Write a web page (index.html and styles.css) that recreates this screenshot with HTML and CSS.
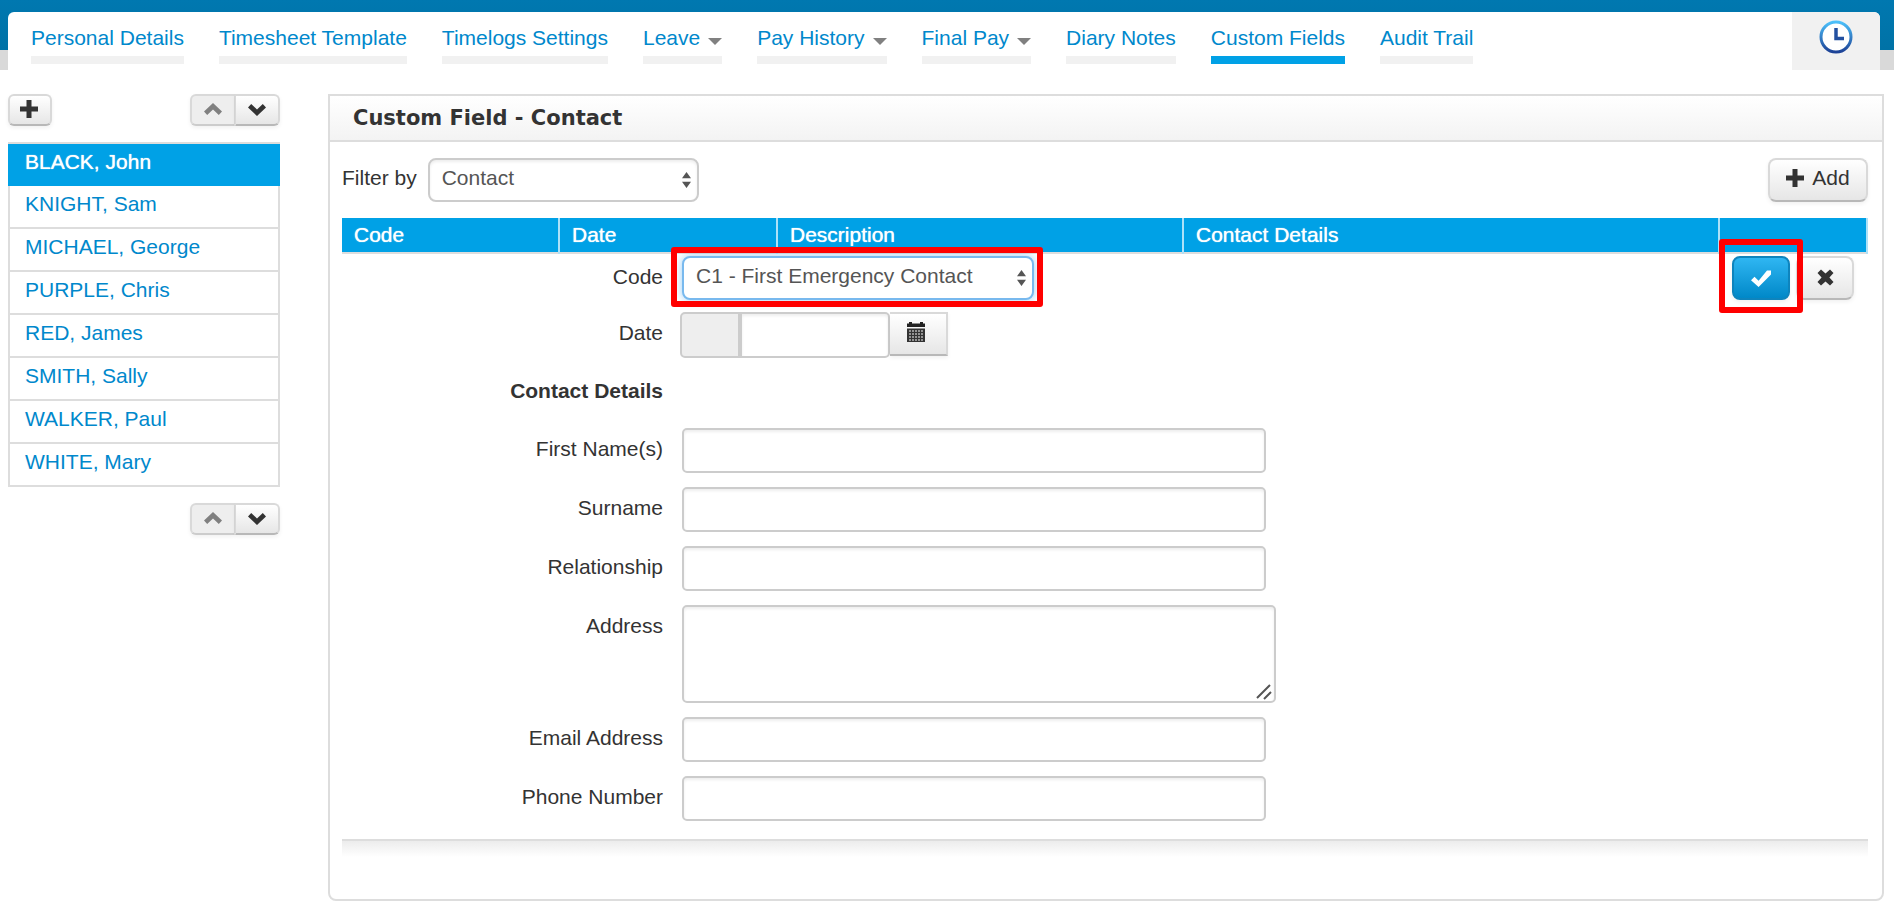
FILE: index.html
```html
<!DOCTYPE html>
<html lang="en">
<head>
<meta charset="utf-8">
<title>Custom Field - Contact</title>
<link rel="stylesheet" href="styles.css">
</head>
<body>
<svg class="defs" aria-hidden="true">
  <symbol id="plus" viewBox="0 0 18 18"><path d="M6.5 0h5v6.500h6.500v5h-6.500v6.500h-5v-6.500h-6.500v-5h6.500z"/></symbol>
  <symbol id="chevron" viewBox="0 0 18 13"><path d="M3.200 1 9 6.400 14.800 1 18 4.600 9 13 0 4.600z"/></symbol>
  <symbol id="check" viewBox="0 0 20 17"><path d="M3.500 6.800 7.600 10.800 16 0.500H20V4.500L7.600 17 0 10.200z"/></symbol>
  <symbol id="cross" viewBox="0 0 17 17"><path d="M4 .5 8.500 4.600 13 .5 16.500 4 12.400 8.500 16.500 13 13 16.500 8.500 12.400 4 16.500 .5 13 4.600 8.500 .5 4z"/></symbol>
</svg>

<header class="top">
  <div class="tabs">
    <nav class="tab-list" aria-label="Employee sections">
      <a class="tab" href="#personal">Personal Details</a>
      <a class="tab" href="#timesheet">Timesheet Template</a>
      <a class="tab" href="#timelogs">Timelogs Settings</a>
      <a class="tab drop" href="#leave">Leave</a>
      <a class="tab drop" href="#history">Pay History</a>
      <a class="tab drop" href="#final">Final Pay</a>
      <a class="tab" href="#diary">Diary Notes</a>
      <a class="tab active" href="#custom" aria-current="page">Custom Fields</a>
      <a class="tab" href="#audit">Audit Trail</a>
    </nav>
    <button class="clock" type="button" aria-label="Time">
      <svg width="34" height="34" viewBox="0 0 34 34">
        <defs><linearGradient id="ring" x1="0" y1="0" x2="0" y2="1"><stop offset="0" stop-color="#4cc0fa"/><stop offset="1" stop-color="#1d4296"/></linearGradient></defs>
        <circle cx="17" cy="17" r="15" fill="#fff" stroke="url(#ring)" stroke-width="3"/>
        <path d="M17 8v10.500h8" fill="none" stroke="#2350a0" stroke-width="3.500"/>
      </svg>
    </button>
  </div>
</header>

<div class="page">
  <aside class="side">
    <div class="side-bar">
      <button class="btn small" type="button" aria-label="Add employee"><svg class="i18"><use href="#plus"/></svg></button>
      <div class="pair">
        <button class="btn small" type="button" aria-label="Previous" disabled><svg class="chev up"><use href="#chevron"/></svg></button>
        <button class="btn small" type="button" aria-label="Next"><svg class="chev"><use href="#chevron"/></svg></button>
      </div>
    </div>
    <ul class="people">
      <li class="current"><a href="#black">BLACK, John</a></li>
      <li><a href="#knight">KNIGHT, Sam</a></li>
      <li><a href="#michael">MICHAEL, George</a></li>
      <li><a href="#purple">PURPLE, Chris</a></li>
      <li><a href="#red">RED, James</a></li>
      <li><a href="#smith">SMITH, Sally</a></li>
      <li><a href="#walker">WALKER, Paul</a></li>
      <li><a href="#white">WHITE, Mary</a></li>
    </ul>
    <div class="side-bar end">
      <div class="pair">
        <button class="btn small" type="button" aria-label="Previous" disabled><svg class="chev up"><use href="#chevron"/></svg></button>
        <button class="btn small" type="button" aria-label="Next"><svg class="chev"><use href="#chevron"/></svg></button>
      </div>
    </div>
  </aside>

  <main class="panel">
    <h1 class="title">Custom Field - Contact</h1>
    <div class="body">
      <div class="filter">
        <label for="filter">Filter by</label>
        <span class="pick filter-pick">
          <select id="filter"><option>Contact</option></select>
          <svg class="arrows" viewBox="0 0 10 18"><path d="M5 0 10 7H0zM0 11h10L5 18z"/></svg>
        </span>
        <button class="btn add" type="button"><svg class="i18"><use href="#plus"/></svg>Add</button>
      </div>

      <table class="grid">
        <colgroup><col class="c-code"><col class="c-date"><col class="c-desc"><col class="c-details"><col class="c-act"></colgroup>
        <thead>
          <tr><th>Code</th><th>Date</th><th>Description</th><th>Contact Details</th><th aria-label="Actions"></th></tr>
        </thead>
        <tbody>
          <tr>
            <td colspan="4">
              <div class="form">
                <label for="code">Code</label>
                <span class="pick code-pick marked">
                  <select id="code"><option>C1 - First Emergency Contact</option></select>
                  <svg class="arrows" viewBox="0 0 10 18"><path d="M5 0 10 7H0zM0 11h10L5 18z"/></svg>
                </span>
                <label for="date">Date</label>
                <div class="date">
                  <span class="prefix"></span>
                  <input id="date" type="text">
                  <button class="btn cal" type="button" aria-label="Open calendar">
                    <svg width="18" height="20" viewBox="0 0 18 20"><path d="M0 1.500h18V5H0zM2 0h3v3H2zM13 0h3v3h-3z" fill="#222"/><path d="M0 6.500h18V20H0z" fill="#333"/><path d="M2 9h14M2 12h14M2 15h14M2 18h14" stroke="#b4b4b4" stroke-width="1.500" stroke-dasharray="2 1"/></svg>
                  </button>
                </div>
                <h2 class="group">Contact Details</h2>
                <label for="first">First Name(s)</label><input id="first" type="text">
                <label for="surname">Surname</label><input id="surname" type="text">
                <label for="relation">Relationship</label><input id="relation" type="text">
                <label for="address">Address</label>
                <span class="area"><textarea id="address"></textarea>
                  <svg class="grip" viewBox="0 0 16 16"><path d="M1 14 14 1M8 15l7-7" /></svg></span>
                <label for="email">Email Address</label><input id="email" type="email">
                <label for="phone">Phone Number</label><input id="phone" type="tel">
              </div>
            </td>
            <td>
              <div class="actions">
                <span class="marked"><button class="btn save" type="button" aria-label="Save"><svg class="tick"><use href="#check"/></svg></button></span>
                <button class="btn cancel" type="button" aria-label="Cancel"><svg class="x"><use href="#cross"/></svg></button>
              </div>
            </td>
          </tr>
        </tbody>
      </table>
      <div class="foot"></div>
    </div>
  </main>
</div>
</body>
</html>
```
FILE: styles.css
```css
* { box-sizing: border-box; }

body {
  margin: 0;
  background: #fff;
  color: #333;
  font: 21px/24px "Liberation Sans", Arial, sans-serif;
}

a { color: #0088cc; text-decoration: none; }
button, input, select, textarea { font: inherit; color: #555; margin: 0; }
button { cursor: pointer; }
svg { display: block; }
.defs { position: absolute; width: 0; height: 0; }

/* Header */
.top {
  padding: 12px 14px 0 8px;
  background: linear-gradient(#0078b0 0, #0072a6 50px, #d9d9d9 50px);
}
.tabs {
  display: flex;
  justify-content: space-between;
  height: 58px;
  background: #fff;
  border-radius: 6px 6px 0 0;
  overflow: hidden;
}
.tab-list { display: flex; gap: 35px; padding: 14px 0 0 23px; }
.tab { height: 38px; border-bottom: 8px solid #f1f1f1; white-space: nowrap; }
.tab.active { border-color: #00a1e6; }
.drop::after {
  content: "";
  display: inline-block;
  margin-left: 8px;
  border: 7px solid transparent;
  border-top-color: #808080;
  border-bottom: 0;
}
.clock {
  display: flex;
  justify-content: center;
  width: 88px;
  padding: 8px 0 0;
  border: 0;
  background: #f1f1f1;
}

/* Layout */
.page {
  display: grid;
  grid-template-columns: 272px minmax(0, 1fr);
  gap: 48px;
  align-items: start;
  padding: 24px 10px 10px 8px;
}

/* Buttons */
.btn {
  display: flex;
  align-items: center;
  justify-content: center;
  padding: 0;
  border: 2px solid #d9d9d9;
  border-bottom-color: #b8b8b8;
  border-radius: 8px;
  background: linear-gradient(#fff, #e6e6e6);
  box-shadow: 0 2px 4px rgba(0, 0, 0, .06);
  color: #333;
  fill: #333;
}
.btn:disabled { background: #eee; border-bottom-color: #ccc; fill: #808080; }
.small { width: 44px; height: 32px; border-radius: 6px; padding: 0 2px 2px 0; }
.i18 { width: 18px; height: 18px; }
.chev { width: 18px; height: 13px; }
.up { transform: rotate(180deg); }
.pair { display: flex; }
.pair .btn { width: 45px; padding-right: 0; }
.pair .btn:first-child { border-radius: 6px 0 0 6px; border-right-width: 1px; }
.pair .btn:last-child { border-radius: 0 6px 6px 0; border-left-width: 1px; }

/* Sidebar */
.side-bar { display: flex; justify-content: space-between; }
.side-bar.end { justify-content: flex-end; }
.people {
  margin: 16px 0;
  padding: 0;
  list-style: none;
  border-top: 2px solid #ddd;
}
.people li {
  padding: 6px 15px 11px;
  border: solid #ddd;
  border-width: 0 2px 2px;
}
.people .current {
  padding-bottom: 12px;
  border-width: 0 2px;
  border-color: #00a1e6;
  background: #00a1e6;
}
.people .current a { color: #fff; text-shadow: 0 0 1px #fff; }

/* Panel */
.panel { border: 2px solid #ddd; border-radius: 0 0 8px 8px; }
.title {
  margin: 0;
  padding: 9px 23px;
  border-bottom: 2px solid #ddd;
  background: linear-gradient(#fff, #f3f3f3);
  font: bold 21px/26px "DejaVu Sans", Verdana, sans-serif;
}
.body { padding: 16px 14px 42px 12px; }
.filter { display: flex; align-items: flex-start; gap: 11px; margin-bottom: 16px; }
.filter label { line-height: 40px; }

/* Fields */
.pick { display: block; position: relative; height: 44px; }
.filter-pick { width: 271px; }
.code-pick { width: 352px; }
.pick select, input, textarea {
  display: block;
  border: 2px solid #ccc;
  border-radius: 5px;
  background: #fff;
  box-shadow: inset 0 2px 3px rgba(0, 0, 0, .07);
}
.pick select {
  width: 100%;
  height: 44px;
  padding: 0 12px 4px;
  border-radius: 8px;
  appearance: none;
}
.arrows {
  position: absolute;
  right: 8px;
  top: 13px;
  width: 9px;
  height: 18px;
  fill: #555;
  pointer-events: none;
}
.code-pick select { border-color: #78b9ee; box-shadow: 0 0 8px rgba(82, 168, 236, .6); }
.add { width: 100px; height: 44px; gap: 8px; margin-left: auto; padding-bottom: 4px; }

/* Highlight frame around a control */
.marked { position: relative; }
.marked::after {
  content: "";
  position: absolute;
  inset: -9px -9px -7px -11px;
  border: 6px solid #f00;
  border-radius: 3px;
  pointer-events: none;
}

/* Table */
.grid { width: 100%; table-layout: fixed; border-collapse: separate; border-spacing: 0; }
.c-code, .c-date { width: 218px; }
.c-desc { width: 406px; }
.c-act { width: 148px; }
.grid th {
  height: 36px;
  padding: 0 12px 2px;
  border: solid #ade1f8;
  border-width: 0 2px 0 0;
  background: #00a1e6;
  box-shadow: inset 0 -2px #ddd;
  color: #fff;
  font-weight: normal;
  text-align: left;
  text-shadow: 0 0 1px #fff;
}
.grid td { padding: 2px 0 18px; vertical-align: top; }

.form {
  display: grid;
  grid-template-columns: 321px minmax(0, 584px);
  column-gap: 19px;
}
.form label, .group { line-height: 42px; text-align: right; }
.form > input, .date, .area, .form > .pick { margin-bottom: 14px; }
.form > input { width: 100%; height: 45px; }
.form > .pick, .date { margin-bottom: 12px; }
.form > input:last-child { margin-bottom: 0; }
.group { grid-column: 1; margin: 0 0 14px; padding-bottom: 2px; font-size: 21px; }
.group + label { grid-column: 1; }

.date { display: flex; margin-left: -2px; }
.prefix {
  width: 60px;
  height: 46px;
  border: 2px solid #ccc;
  border-radius: 5px 0 0 5px;
  background: #eee;
}
.date input { width: 150px; height: 46px; border-radius: 0 5px 5px 0; }
.cal { width: 58px; height: 44px; border-left: 0; border-radius: 0; padding: 0 4px 4px 0; }

.area { position: relative; margin-right: -10px; }
.area textarea { width: 100%; height: 98px; resize: none; }
.grip {
  position: absolute;
  right: 4px;
  bottom: 3px;
  width: 16px;
  height: 16px;
  stroke: #555;
  stroke-width: 2;
  pointer-events: none;
}

.actions { display: flex; gap: 6px; padding-left: 12px; }
.save, .cancel { width: 58px; height: 44px; }
.save {
  border-color: #0e84bd;
  background: linear-gradient(#2fb6f2, #0088c8);
  fill: #fff;
}
.actions .marked::after { inset: -17px -13px -13px -13px; }
.tick { width: 20px; height: 17px; }
.x { width: 17px; height: 17px; }
.cancel { padding-bottom: 2px; }

.foot {
  height: 18px;
  border-top: 2px solid #ddd;
  background: linear-gradient(#ececec, #fff);
}
```
